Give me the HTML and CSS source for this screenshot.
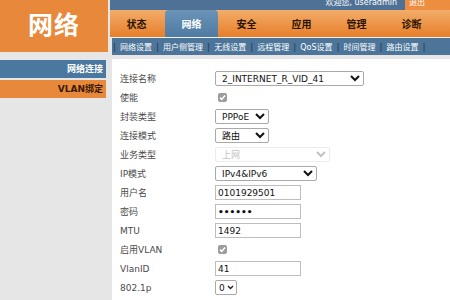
FILE: index.html
```html
<!DOCTYPE html>
<html lang="zh-CN">
<head>
    <meta charset="UTF-8">
    <title>网络</title>
    <link rel="stylesheet" href="styles.css">
</head>
<body>
<div class="page">
    <aside class="side">
        <div class="side-title">网络</div>
        <ul class="side-menu">
            <li class="active">网络连接</li>
            <li>VLAN绑定</li>
        </ul>
    </aside>

    <div class="main">
        <div class="topbar">
            <span class="user">欢迎您, useradmin</span>
            <span class="logout">退出</span>
        </div>
        <nav class="tabs">
            <a href="#">状态</a>
            <a href="#" class="current">网络</a>
            <a href="#">安全</a>
            <a href="#">应用</a>
            <a href="#">管理</a>
            <a href="#">诊断</a>
        </nav>
        <nav class="subnav">
            <span class="sep">|</span>
            <a href="#">网络设置</a><span class="sep">|</span>
            <a href="#">用户侧管理</a><span class="sep">|</span>
            <a href="#">无线设置</a><span class="sep">|</span>
            <a href="#">远程管理</a><span class="sep">|</span>
            <a href="#">QoS设置</a><span class="sep">|</span>
            <a href="#">时间管理</a><span class="sep">|</span>
            <a href="#">路由设置</a><span class="sep">|</span>
        </nav>

        <div class="content">
            <form class="wan-form">
                <div class="row">
                    <label>连接名称</label>
                    <select class="w-name"><option>2_INTERNET_R_VID_41</option></select>
                </div>
                <div class="row">
                    <label>使能</label>
                    <span class="check"><svg width="9" height="9" viewBox="0 0 9 9"><path d="M2 4.6 L3.8 6.4 L7 2.6" fill="none" stroke="#fff" stroke-width="1.5"/></svg></span>
                </div>
                <div class="row">
                    <label>封装类型</label>
                    <select class="w-short"><option>PPPoE</option></select>
                </div>
                <div class="row">
                    <label>连接模式</label>
                    <select class="w-short"><option>路由</option></select>
                </div>
                <div class="row">
                    <label>业务类型</label>
                    <select class="w-service" disabled><option>上网</option></select>
                </div>
                <div class="row">
                    <label>IP模式</label>
                    <select class="w-ip"><option>IPv4&amp;IPv6</option></select>
                </div>
                <div class="row">
                    <label>用户名</label>
                    <input type="text" value="0101929501">
                </div>
                <div class="row">
                    <label>密码</label>
                    <input type="password" value="123456">
                </div>
                <div class="row">
                    <label>MTU</label>
                    <input type="text" value="1492">
                </div>
                <div class="row">
                    <label>启用VLAN</label>
                    <span class="check"><svg width="9" height="9" viewBox="0 0 9 9"><path d="M2 4.6 L3.8 6.4 L7 2.6" fill="none" stroke="#fff" stroke-width="1.5"/></svg></span>
                </div>
                <div class="row">
                    <label>VlanID</label>
                    <input type="text" value="41">
                </div>
                <div class="row">
                    <label>802.1p</label>
                    <span class="mini-select">0<svg width="7" height="5" viewBox="0 0 7 5"><path d="M1 1 L3.5 3.5 L6 1" fill="none" stroke="#222" stroke-width="1.4"/></svg></span>
                </div>
            </form>
        </div>
    </div>
</div>
</body>
</html>
```

FILE: styles.css
```css
body {
    margin: 0;
    padding: 0;
    background-color: #e6e6e6;
    font-family: "DejaVu Sans", "Noto Sans CJK SC", sans-serif;
    font-size: 9px;
    color: #333;
    overflow: hidden;
}

.page {
    display: grid;
    grid-template-columns: 108px 1fr;
    column-gap: 2px;
    height: 300px;
}

/* left column */
.side-title {
    background-color: #e8883a;
    color: #fff;
    height: 52px;
    box-sizing: border-box;
    padding-bottom: 6px;
    display: flex;
    align-items: center;
    justify-content: center;
    font-family: "Noto Sans CJK SC", sans-serif;
    font-size: 25px;
    font-weight: bold;
    letter-spacing: 1px;
}

.side-menu {
    list-style: none;
    margin: 8px 2px 0 0;
    padding: 0;
    display: flex;
    flex-direction: column;
    gap: 2px;
}

.side-menu li {
    height: 18px;
    line-height: 18px;
    text-align: right;
    padding-right: 3px;
    background-color: #e8883a;
    color: #3a1a00;
    font-weight: bold;
    font-size: 9px;
}

.side-menu li.active {
    background-color: #4b789f;
    color: #fff;
}

/* top area */
.main {
    display: flex;
    flex-direction: column;
}

.topbar {
    height: 10px;
    background-color: #4e7195;
    display: flex;
    justify-content: flex-end;
    overflow: hidden;
    line-height: 6px;
    color: #fff;
    font-size: 8px;
}

.topbar .user {
    padding-right: 8px;
}

.topbar .logout {
    width: 45px;
    background-color: #ec8d3f;
    padding-left: 4px;
    box-sizing: border-box;
}

.tabs {
    height: 27px;
    display: flex;
    gap: 2px;
    background: linear-gradient(#f3ad6a, #e67e2a);
    border-bottom: 1px solid #f2f2f2;
}

.tabs a {
    width: 53px;
    display: flex;
    align-items: center;
    justify-content: center;
    text-decoration: none;
    color: #2a1400;
    font-family: "Noto Sans CJK SC", sans-serif;
    font-weight: bold;
    font-size: 10px;
}

.tabs a.current {
    background: linear-gradient(#6a93b8, #4f7ba2);
    color: #fff;
    border-radius: 4px 4px 0 0;
}

.subnav {
    height: 17px;
    margin-left: 2px;
    padding-left: 1px;
    background-color: #4c7599;
    display: flex;
    align-items: center;
    gap: 4px;
    color: #fff;
    white-space: nowrap;
    overflow: hidden;
}

.subnav a {
    color: #fff;
    text-decoration: none;
    font-size: 8px;
}

.subnav .sep {
    color: #1d3550;
    font-size: 9px;
}

/* form */
.content {
    flex: 1;
    margin: 4px 0 0 2px;
    background-color: #fff;
    padding: 10px 0 0 8px;
}

.wan-form {
    display: flex;
    flex-direction: column;
}

.row {
    display: flex;
    align-items: center;
    height: 19px;
}

.row label {
    width: 95px;
    color: #4a4a4a;
}

select, input, .mini-select {
    font-family: "DejaVu Sans", "Noto Sans CJK SC", sans-serif;
    font-size: 9px;
    height: 15px;
    box-sizing: border-box;
    border: 1px solid #a9a9a9;
    border-radius: 2px;
    background-color: #fff;
    color: #111;
    padding: 0 2px;
    margin: 0;
}

input {
    width: 86px;
    border-color: #bdbdbd;
    border-radius: 0;
}

input[type="password"] {
    font-weight: bold;
}

.w-name { width: 149px; }
.w-short { width: 54px; }
.w-service { width: 115px; color: #aaa; border-color: #e4e4e4; }
.w-ip { width: 102px; }

.mini-select {
    width: 22px;
    display: inline-flex;
    align-items: center;
    justify-content: space-between;
    padding: 0 2px 0 3px;
}

.check {
    display: inline-flex;
    width: 9px;
    height: 9px;
    margin-left: 3px;
    background-color: #9c9c9c;
    border-radius: 2px;
}
```
